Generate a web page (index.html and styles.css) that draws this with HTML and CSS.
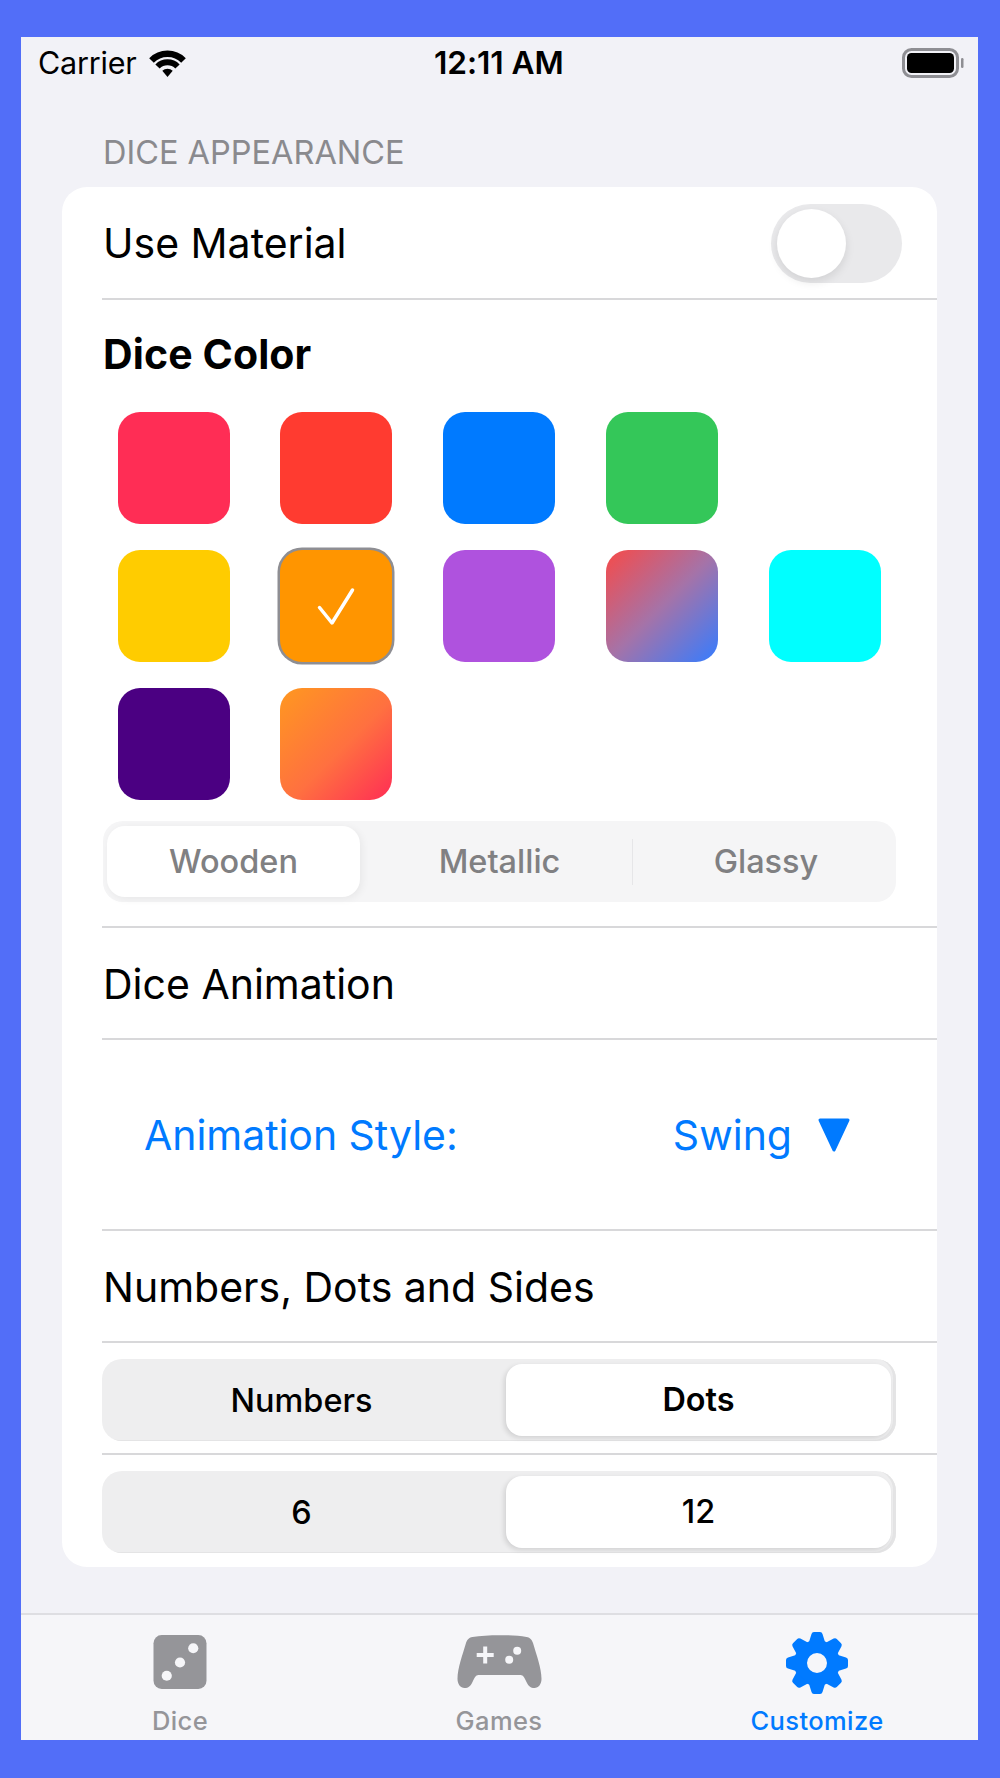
FILE: index.html
```html
<!DOCTYPE html>
<html lang="en">
<head>
<meta charset="utf-8">
<title>Dice Appearance</title>
<link rel="stylesheet" href="styles.css">
</head>
<body>
<div class="phone">
  <header class="status">
    <div class="status-left">
      <span class="carrier">Carrier</span>
      <svg class="wifi" viewBox="0 0 37 28"><path d="M2.500 11.500a22.500 22.500 0 0 1 32 0" fill="none" stroke="#000" stroke-width="6.500"/><path d="M8.500 17.500a14 14 0 0 1 20 0" fill="none" stroke="#000" stroke-width="6"/><path d="M13.300 21.800a7.500 7.500 0 0 1 10.400 0L18.500 28z" fill="#000"/></svg>
    </div>
    <span class="time">12:11 AM</span>
    <svg class="battery" viewBox="0 0 62 30"><rect x="1.500" y="1.500" width="54" height="27" rx="8" fill="none" stroke="#8e8e93" stroke-width="3"/><rect x="5" y="5" width="47" height="20" rx="4.500" fill="#000"/><rect x="59" y="10" width="2.500" height="10" rx="1.200" fill="#8e8e93"/></svg>
  </header>

  <main class="content">
    <h2 class="section-title">DICE APPEARANCE</h2>
    <section class="card">
      <div class="row row-toggle">
        <span class="label">Use Material</span>
        <span class="toggle"><span class="knob"></span></span>
      </div>

      <div class="row row-color">
        <h3 class="label label-bold">Dice Color</h3>
        <div class="swatches">
          <span class="swatch c-pink"></span>
          <span class="swatch c-red"></span>
          <span class="swatch c-blue"></span>
          <span class="swatch c-green"></span>
          <span class="swatch c-empty"></span>
          <span class="swatch c-yellow"></span>
          <span class="swatch c-orange selected">
            <svg class="check" viewBox="0 0 40 40"><path d="M3.500 21.500 16 37 36.500 4" fill="none" stroke="#fff" stroke-width="3.500" stroke-linecap="round" stroke-linejoin="round"/></svg>
          </span>
          <span class="swatch c-purple"></span>
          <span class="swatch c-grad-blue"></span>
          <span class="swatch c-cyan"></span>
          <span class="swatch c-indigo"></span>
          <span class="swatch c-grad-orange"></span>
        </div>
        <div class="material-seg">
          <span class="mat mat-active">Wooden</span>
          <span class="mat mat-mid">Metallic</span>
          <span class="mat mat-last">Glassy</span>
        </div>
      </div>

      <div class="row row-title"><span class="label">Dice Animation</span></div>

      <div class="row row-anim">
        <span class="label label-blue label-tight">Animation Style:</span>
        <span class="anim-value">
          <span class="label label-blue">Swing</span>
          <svg class="tri" viewBox="0 0 34 34"><path d="M3 2h28L17 32z" fill="#007aff" stroke="#007aff" stroke-width="3" stroke-linejoin="round"/></svg>
        </span>
      </div>

      <div class="row row-title"><span class="label">Numbers, Dots and Sides</span></div>

      <div class="row row-seg">
        <div class="seg"><span class="seg-item">Numbers</span><span class="seg-item seg-on">Dots</span></div>
      </div>
      <div class="row row-seg row-last">
        <div class="seg"><span class="seg-item">6</span><span class="seg-item seg-on seg-num">12</span></div>
      </div>
    </section>
  </main>

  <nav class="tabbar">
    <div class="tab">
      <svg class="ic-dice" viewBox="0 0 52 53"><rect width="52" height="53" rx="8" fill="#959599"/><circle cx="13" cy="40" r="5" fill="#f6f6f9"/><circle cx="26" cy="27" r="5" fill="#f6f6f9"/><circle cx="39" cy="13" r="5" fill="#f6f6f9"/></svg>
      <span class="tab-label">Dice</span>
    </div>
    <div class="tab">
      <svg class="ic-games" viewBox="0 0 84 53"><path d="M15 2C30-.5 54-.5 69 2c4 .8 5.500 3 6.500 6C79 20 84 33 84 44c0 5-3 9-7 9-4 0-6-2-8-6-2-4-3-7-6-7H21c-3 0-4 3-6 7-2 4-4 6-8 6-4 0-7-4-7-9C0 33 5 20 8.500 8 9.500 5 11 2.800 15 2z" fill="#959599"/><path d="M25.700 11.500h4v6.500h6.500v4h-6.500v6.500h-4V22h-6.500v-4h6.500z" fill="#f6f6f9"/><circle cx="59.700" cy="15.700" r="4" fill="#f6f6f9"/><circle cx="51.700" cy="24.700" r="4" fill="#f6f6f9"/></svg>
      <span class="tab-label">Games</span>
    </div>
    <div class="tab">
      <svg class="ic-gear" viewBox="-32 -32 64 64">
        <circle r="16.500" fill="none" stroke="#007aff" stroke-width="13"/>
        <g fill="#007aff">
          <path d="M-8-21-5.500-29Q-5-31-3-31H3Q5-31 5.500-29L8-21z"/>
          <path transform="rotate(45)" d="M-8-21-5.500-29Q-5-31-3-31H3Q5-31 5.500-29L8-21z"/>
          <path transform="rotate(90)" d="M-8-21-5.500-29Q-5-31-3-31H3Q5-31 5.500-29L8-21z"/>
          <path transform="rotate(135)" d="M-8-21-5.500-29Q-5-31-3-31H3Q5-31 5.500-29L8-21z"/>
          <path transform="rotate(180)" d="M-8-21-5.500-29Q-5-31-3-31H3Q5-31 5.500-29L8-21z"/>
          <path transform="rotate(225)" d="M-8-21-5.500-29Q-5-31-3-31H3Q5-31 5.500-29L8-21z"/>
          <path transform="rotate(270)" d="M-8-21-5.500-29Q-5-31-3-31H3Q5-31 5.500-29L8-21z"/>
          <path transform="rotate(315)" d="M-8-21-5.500-29Q-5-31-3-31H3Q5-31 5.500-29L8-21z"/>
        </g>
      </svg>
      <span class="tab-label tab-label-on">Customize</span>
    </div>
  </nav>
</div>
</body>
</html>
```

FILE: styles.css
```css
* { box-sizing: border-box; }
html, body { margin: 0; padding: 0; }
body {
  width: 1000px;
  height: 1778px;
  background: #526ef8;
  padding: 37px 22px 38px 21px;
  font-family: Inter, "Liberation Sans", sans-serif;
  color: #000;
  overflow: hidden;
}
.phone {
  height: 1703px;
  background: #f2f2f7;
  display: flex;
  flex-direction: column;
}

/* status bar */
.status {
  height: 52px;
  display: flex;
  align-items: center;
  justify-content: space-between;
  padding: 0 14px 0 17px;
  flex: none;
  position: relative;
}
.status-left { display: flex; align-items: center; gap: 12px; }
.carrier { font-size: 30.500px; letter-spacing: -0.2px; line-height: 52px; }
.wifi { width: 37px; height: 28px; display: block; }
.time { font-size: 31.700px; font-weight: 600; letter-spacing: -0.1px; position: absolute; left: 413px; top: 0; line-height: 52px; }
.battery { width: 62px; height: 30px; display: block; }

/* content */
.content { flex: 1; padding: 0 41px; }
.section-title {
  margin: 0;
  padding: 42px 0 0 41px;
  height: 98px;
  font-size: 32.500px;
  line-height: 43px;
  font-weight: 400;
  color: #8a8a8e;
}
.card {
  background: #fff;
  border-radius: 25px;
  height: 1380px;
  width: 875px;
}
.row {
  margin-left: 40px;
  border-bottom: 2px solid #d8d8da;
  display: flex;
  align-items: center;
}
.label { font-size: 41px; line-height: 48px; font-weight: 400; white-space: nowrap; margin: 0; }
.label-bold { font-weight: 700; letter-spacing: 0.1px; }
.label-blue { color: #007aff; }
.label-tight { letter-spacing: -0.05px; }

.row-toggle { height: 113px; justify-content: space-between; padding: 0 35px 0 1px; }
.toggle {
  width: 131px;
  height: 79px;
  margin-top: 1px;
  border-radius: 40px;
  background: #e9e9eb;
  display: flex;
  align-items: center;
  padding-left: 6px;
}
.knob {
  width: 69px;
  height: 69px;
  border-radius: 50%;
  background: #fff;
  box-shadow: 0 4px 10px rgba(0, 0, 0, .1);
}

.row-color {
  height: 628px;
  flex-direction: column;
  align-items: stretch;
  padding: 30px 0 0 1px;
}
.swatches {
  display: grid;
  grid-template-columns: 162px 163px 163px 163px 112px;
  grid-auto-rows: 112px;
  row-gap: 26px;
  margin: 34px 0 0 15px;
}
.swatch { width: 112px; border-radius: 22px; display: flex; align-items: center; justify-content: center; }
.c-pink { background: #ff2d55; }
.c-red { background: #ff3b30; }
.c-blue { background: #007aff; }
.c-green { background: #34c759; }
.c-yellow { background: #ffcc00; }
.c-orange { background: #ff9500; }
.c-purple { background: #af52de; }
.c-grad-blue { background: linear-gradient(135deg, #f74a48 0%, #a573a8 50%, #357cff 100%); }
.c-cyan { background: #00ffff; }
.c-indigo { background: #4b0082; }
.c-grad-orange { background: linear-gradient(135deg, #ff9820 0%, #ff7040 55%, #ff2d55 100%); }
.selected { box-shadow: 0 0 0 2.500px #8e8e93; }
.check { width: 40px; height: 40px; display: block; }

.material-seg {
  margin: 21px 0 0 0;
  width: 793px;
  height: 81px;
  background: #f5f5f6;
  border-radius: 20px;
  display: flex;
  align-items: center;
  padding-left: 4px;
}
.mat { font-size: 32.500px; font-weight: 500; color: #808082; text-align: center; }
.mat-active {
  width: 253px;
  height: 71px;
  line-height: 71px;
  background: #fff;
  border-radius: 18px;
  box-shadow: 2px 2px 8px rgba(0, 0, 0, .06);
}
.mat-mid { width: 272px; padding-left: 7px; }
.mat-last { flex: 1; height: 46px; line-height: 46px; border-left: 1px solid #e6e6e8; padding-left: 3px; }

.row-title { height: 112px; padding: 2px 0 0 1px; }
.row-anim { height: 191px; justify-content: space-between; padding: 0 86px 0 42px; }
.anim-value { display: flex; align-items: center; gap: 25px; }
.tri { width: 34px; height: 34px; display: block; }

.row-seg { height: 112px; align-items: flex-start; padding: 16px 0 0 0; }
.row-last { border-bottom: 0; }
.seg {
  width: 794px;
  height: 82px;
  background: #eeeeef;
  border-radius: 20px;
  display: flex;
  align-items: center;
  box-shadow: inset -3px -1px 0 #e4e4e5;
}
.seg-item { font-size: 32.400px; font-weight: 500; text-align: center; }
.seg-item:first-child { width: 399px; }
.seg-on {
  margin-left: 5px;
  width: 385px;
  height: 72px;
  line-height: 72px;
  background: #fff;
  border-radius: 16px;
  font-weight: 600;
  box-shadow: -2px 2px 5px rgba(0, 0, 0, .12);
}
.seg-num { font-weight: 500; }

/* tab bar */
.tabbar {
  flex: none;
  height: 127px;
  background: #f6f6f9;
  border-top: 2px solid #dedee2;
  display: grid;
  grid-template-columns: 318px 320px 316px;
}
.tab { display: flex; flex-direction: column; align-items: center; height: 125px; }
.ic-dice { width: 54px; height: 54px; margin-top: 20px; }
.ic-games { width: 85px; height: 53px; margin-top: 20px; margin-bottom: 1px; }
.ic-gear { width: 64px; height: 64px; margin-top: 16px; margin-bottom: -6px; }
.tab-label { font-size: 25.500px; line-height: 30px; font-weight: 500; color: #959599; letter-spacing: 0.4px; margin-top: 17px; }
.tab-label-on { color: #007aff; }
```
